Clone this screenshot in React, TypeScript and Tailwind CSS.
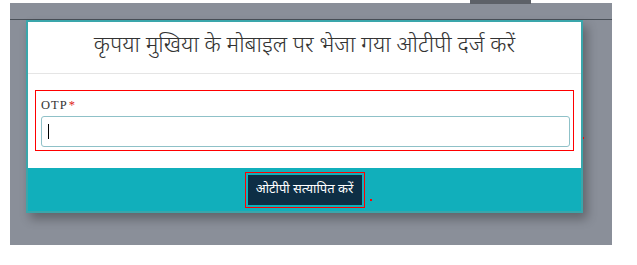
import React from "react"

const deva = "font-['Noto_Sans_Devanagari','Lohit_Devanagari','Noto_Sans',sans-serif]"

export default function App() {
  return (
    <div className="relative h-[265px] w-[637px] overflow-hidden bg-white">
      <div className="ml-[10px] mt-[3px] h-[242px] w-[602px] bg-[#8a8f99] pt-[17px] relative">
        <div className="absolute left-[460px] top-[-3px] h-[4px] w-[61px] bg-[#5d6168]" />
        <div className="absolute left-0 right-0 top-[16px] h-px bg-[#4a5058]" />
        <div className="relative ml-[16px] flex h-[193px] w-[557px] flex-col border-2 border-[#3aa6ab] bg-white shadow-[4px_6px_10px_rgba(0,0,0,0.3)]">
          <div className="flex h-[52px] items-center justify-center border-b border-[#e5e5e5]">
            <h1 className={`${deva} text-[22.3px] font-light leading-none text-[#333]`}>
              कृपया मुखिया के मोबाइल पर भेजा गया ओटीपी दर्ज करें
            </h1>
          </div>
          <div className="flex h-[94px] flex-col px-[7px] pt-[16px]">
            <div className="flex h-[61px] flex-col border border-[#ff0000] pl-[5px] pr-[3px] pb-[3px]">
              <label className="mt-[5px] h-[20px] font-['Liberation_Serif',serif] text-[12.5px] tracking-[1px] text-[#333]">
                OTP<span className="ml-[1px] text-[#e02020]">*</span>
              </label>
              <div className="flex h-[31px] items-center rounded-[3px] border border-[#8fc1c8] bg-white pl-[6px]">
                <span className="h-[15px] w-px bg-black" />
              </div>
            </div>
          </div>
          <div className="relative flex flex-1 items-center justify-center bg-[#11afbb]">
            <div className="border border-[#ff0000] p-[2px]">
              <button className={`${deva} h-[30px] w-[114px] bg-[#0d2e45] text-[13px] text-white`}>
                ओटीपी सत्यापित करें
              </button>
            </div>
            <span className="absolute left-[342px] top-[31px] h-[2px] w-[2px] bg-[#ff0000]" />
          </div>
          <span className="absolute right-[-3px] top-[115px] h-[2px] w-[1px] bg-[#ff0000]" />
        </div>
      </div>
    </div>
  )
}
